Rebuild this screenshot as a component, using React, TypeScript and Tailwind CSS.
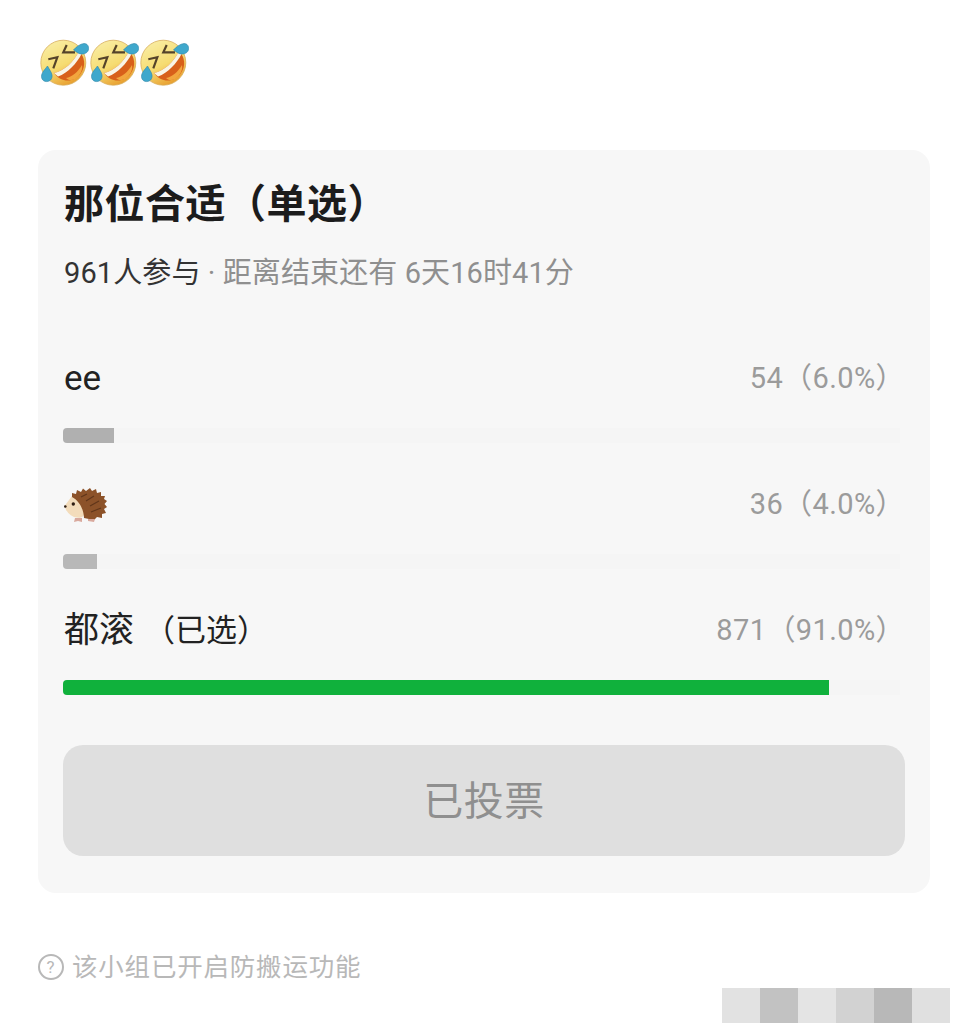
const cjk = "font-['Roboto','Noto_Sans_CJK_SC',sans-serif]";

function RoflEmoji() {
  return (
    <svg width="50" height="50" viewBox="0 0 50 50" className="blur-[0.3px]">
      <defs>
        <linearGradient id="rofl-face" x1="0.2" y1="0" x2="0.7" y2="1">
          <stop offset="0" stopColor="#f9eea6" />
          <stop offset="0.55" stopColor="#f6dc72" />
          <stop offset="1" stopColor="#e79a2a" />
        </linearGradient>
      </defs>
      <circle cx="24.300" cy="26.700" r="22.500" fill="url(#rofl-face)" stroke="#d8ad5a" strokeWidth="0.800" />
      {/* mouth */}
      <path d="M15 37 C25 35 35 26 40 15 C46 21 47 30 42 37 C36 46 23 48 15 37 Z" fill="#d8601a" />
      <path d="M15 37 C25 35 35 26 40 15 L42.500 18 C38 27 29 37 19 40.500 Z" fill="#f9f5e6" />
      <path d="M27 42 C33 41 39 36 43 29 C44 34 41 40 36 43 C32 45 29 44 27 42 Z" fill="#f2a63e" />
      {/* eyes */}
      <path d="M9.300 23.300 L18.300 21.300 L14.300 32.300" fill="none" stroke="#55432a" strokeWidth="2.200" />
      <path d="M27.700 9 L24.300 16.300 L36 16.300" fill="none" stroke="#55432a" strokeWidth="2.200" />
      {/* tears */}
      <path d="M8.500 30 C6 33.500 2.500 36.500 2.500 40.500 C2.500 44 5.500 46 8.500 45.500 C11.500 45 13.500 42.500 13 39 C12.500 36 10 33 8.500 30 Z" fill="#3fa8cc" stroke="#2a84a8" strokeWidth="0.600" />
      <path d="M34.500 14 C37.500 10.500 41 8 45 7.500 C48.500 7.500 50 10.500 49.500 13.500 C49 16.500 45.500 18.500 42 18 C39 17.500 37 15.500 34.500 14 Z" fill="#3fa8cc" stroke="#2a84a8" strokeWidth="0.600" />
    </svg>
  );
}

function HedgehogEmoji() {
  return (
    <svg width="46" height="36" viewBox="0 0 46 36" className="blur-[0.3px]">
      <path d="M0.500 19 L8 9 C15 8 20 15 21 24 C21 30 17 32 10 30 C5 28 2 24 0.500 19 Z" fill="#f3dcbb" />
      <path d="M8 10 L8 6 L12 7 L13 3 L17 5 L19 1.500 L22 4 L26 1 L28 4 L32 2 L33 6 L37 5 L37 9 L41 9 L40 12 L43 14 L40.500 17 L43 20 L40 22 L42 26 L38 27 L38 31 L33 30 L30 33 L20 31 C20 24 16 14 8 10 Z" fill="#8c5229" />
      <path d="M17 10 L23 7 M22 14 L30 9 M26 19 L35 14 M27 25 L37 21" stroke="#61361a" strokeWidth="1.200" />
      <circle cx="9.300" cy="17" r="1.700" fill="#2d1d12" />
      <circle cx="1.300" cy="19.500" r="1.300" fill="#2d1d12" />
      <path d="M11 31 L10 35 L14 34 L18 35 L18 31 M24 32 L24 34 L30 35 L31 32" fill="#d9a99d" />
    </svg>
  );
}

function PollOption({ label, count, pct, fill, fillClass, children }: { label?: string; count: string; pct: string; fill: string; fillClass: string; children?: React.ReactNode }) {
  return (
    <div>
      <div className="flex h-[42px] items-center justify-between">
        <div className="ml-px flex items-center text-[35px] text-[#222]">
          {label}
          {children}
        </div>
        <div className="text-[29px] tracking-[0.4px] text-[#9b9b9b]">
          {count}（{pct}）
        </div>
      </div>
      <div className="mt-[28px] h-[15px] w-[837px] overflow-hidden rounded-l-[4px] bg-[#f5f5f5]">
        <div className={`h-full ${fillClass}`} style={{ width: fill }} />
      </div>
    </div>
  );
}

export default function App() {
  return (
    <div className={`min-h-[1023px] w-[968px] overflow-hidden bg-white ${cjk}`}>
      <div className="flex pl-[39px] pt-[36px]">
        <RoflEmoji />
        <RoflEmoji />
        <RoflEmoji />
      </div>

      {/* poll card */}
      <div className="ml-[38px] mt-[64px] h-[743px] w-[892px] rounded-[18px] bg-[#f7f7f7] px-[25px] pt-[28px]">
        <h1 className="ml-px text-[40px] font-bold leading-[54px] tracking-[0.5px] text-[#1c1c1c]">那位合适（单选）</h1>
        <div className="ml-px mt-[22px] text-[29px] leading-[38px] tracking-[0.1px] text-[#333]">
          961人参与<span className="text-[#8f8f8f]"> · 距离结束还有 6天16时41分</span>
        </div>

        <div className="mt-[66px] flex flex-col gap-[41px]">
          <PollOption label="ee" count="54" pct="6.0%" fill="6.100%" fillClass="bg-[#b0b0b0]" />
          <PollOption count="36" pct="4.0%" fill="4.100%" fillClass="bg-[#b8b8b8]">
            <HedgehogEmoji />
          </PollOption>
          <PollOption label="都滚" count="871" pct="91.0%" fill="91.500%" fillClass="bg-[#10b13c]">
            <span className="ml-[10px] text-[31px]">（已选）</span>
          </PollOption>
        </div>

        <div className="mt-[50px] flex h-[111px] w-[842px] items-center justify-center rounded-[20px] bg-[#dfdfdf] pt-[3px] text-[40px] tracking-[0.5px] text-[#8f8f8f]">
          已投票
        </div>
      </div>

      <div className="ml-[38px] mt-[56px] flex items-center gap-[8px] text-[25.500px] leading-[36px] tracking-[0.8px] text-[#b8b8b8]">
        <span className="flex h-[26px] w-[26px] items-center justify-center rounded-full border-2 border-[#b8b8b8] text-[17px] leading-none">?</span>
        该小组已开启防搬运功能
      </div>

      {/* blurred mosaic, bottom right */}
      <div className="ml-[722px] mt-[3px] flex h-[35px]">
        <div className="w-[38px] bg-[#e2e2e2]" />
        <div className="w-[38px] bg-[#c2c2c2]" />
        <div className="w-[38px] bg-[#e4e4e4]" />
        <div className="w-[38px] bg-[#d2d2d2]" />
        <div className="w-[38px] bg-[#b8b8b8]" />
        <div className="w-[38px] bg-[#e0e0e0]" />
      </div>
    </div>
  );
}
